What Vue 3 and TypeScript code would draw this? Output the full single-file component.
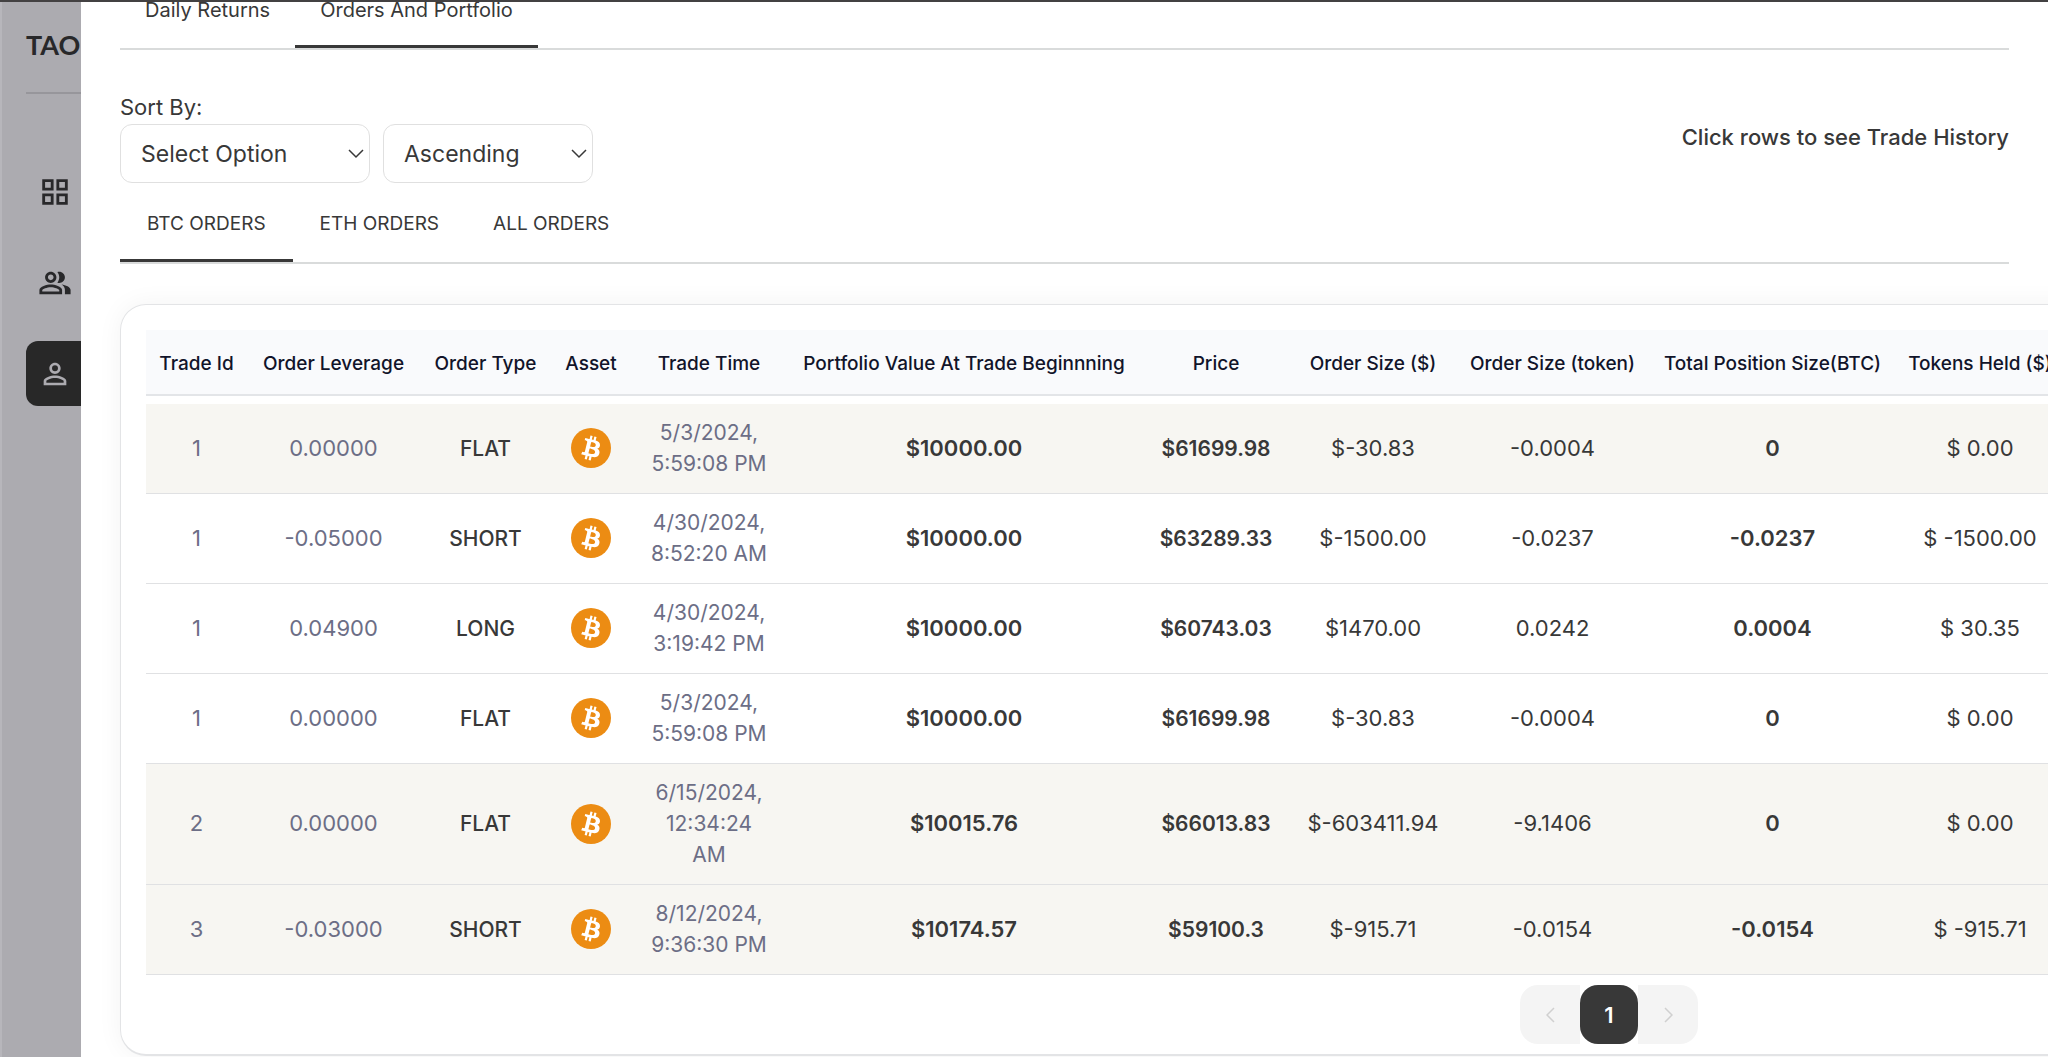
<script setup lang="ts">
import { ref } from 'vue'

interface Order {
  id: number
  leverage: string
  type: string
  time: string
  value: string
  price: string
  size: string
  tokens: string
  position: string
  held: string
  shaded: boolean
}

const pageTabs = ['Daily Returns', 'Orders And Portfolio']
const orderTabs = ['BTC ORDERS', 'ETH ORDERS', 'ALL ORDERS']
const activePage = ref('Orders And Portfolio')
const activeOrders = ref('BTC ORDERS')

const columns = [
  { label: 'Trade Id', width: 101 },
  { label: 'Order Leverage', width: 173 },
  { label: 'Order Type', width: 131 },
  { label: 'Asset', width: 80 },
  { label: 'Trade Time', width: 156 },
  { label: 'Portfolio Value At Trade Beginnning', width: 354 },
  { label: 'Price', width: 150 },
  { label: 'Order Size ($)', width: 164 },
  { label: 'Order Size (token)', width: 195 },
  { label: 'Total Position Size(BTC)', width: 245 },
  { label: 'Tokens Held ($)', width: 170 },
]

const orders: Order[] = [
  { id: 1, leverage: '0.00000', type: 'FLAT', time: '5/3/2024, 5:59:08 PM', value: '$10000.00', price: '$61699.98', size: '$-30.83', tokens: '-0.0004', position: '0', held: '$ 0.00', shaded: true },
  { id: 1, leverage: '-0.05000', type: 'SHORT', time: '4/30/2024, 8:52:20 AM', value: '$10000.00', price: '$63289.33', size: '$-1500.00', tokens: '-0.0237', position: '-0.0237', held: '$ -1500.00', shaded: false },
  { id: 1, leverage: '0.04900', type: 'LONG', time: '4/30/2024, 3:19:42 PM', value: '$10000.00', price: '$60743.03', size: '$1470.00', tokens: '0.0242', position: '0.0004', held: '$ 30.35', shaded: false },
  { id: 1, leverage: '0.00000', type: 'FLAT', time: '5/3/2024, 5:59:08 PM', value: '$10000.00', price: '$61699.98', size: '$-30.83', tokens: '-0.0004', position: '0', held: '$ 0.00', shaded: false },
  { id: 2, leverage: '0.00000', type: 'FLAT', time: '6/15/2024, 12:34:24 AM', value: '$10015.76', price: '$66013.83', size: '$-603411.94', tokens: '-9.1406', position: '0', held: '$ 0.00', shaded: true },
  { id: 3, leverage: '-0.03000', type: 'SHORT', time: '8/12/2024, 9:36:30 PM', value: '$10174.57', price: '$59100.3', size: '$-915.71', tokens: '-0.0154', position: '-0.0154', held: '$ -915.71', shaded: true },
]
</script>

<template>
  <div class="app">
    <aside class="sidebar">
      <div class="brand">TAO</div>
      <nav class="menu">
        <a href="#dashboard" class="menu-item" aria-label="Dashboard">
          <svg width="34" height="34" viewBox="0 0 24 24" fill="currentColor">
            <path d="M3 3v8h8V3H3zm6 6H5V5h4v4zm-6 4v8h8v-8H3zm6 6H5v-4h4v4zm4-16v8h8V3h-8zm6 6h-4V5h4v4zm-6 4v8h8v-8h-8zm6 6h-4v-4h4v4z" />
          </svg>
        </a>
        <a href="#miners" class="menu-item" aria-label="Miners">
          <svg width="34" height="34" viewBox="0 0 24 24" fill="currentColor">
            <path d="M16.67 13.13C18.04 14.06 19 15.32 19 17v3h4v-3c0-2.18-3.57-3.47-6.33-3.87zM15 12c2.21 0 4-1.79 4-4s-1.79-4-4-4c-.47 0-.91.1-1.33.24C14.5 5.27 15 6.58 15 8s-.5 2.73-1.33 3.76c.42.14.86.24 1.33.24zM9 12c2.21 0 4-1.79 4-4s-1.79-4-4-4-4 1.79-4 4 1.79 4 4 4zm0-6c1.1 0 2 .9 2 2s-.9 2-2 2-2-.9-2-2 .9-2 2-2zm0 7c-2.67 0-8 1.34-8 4v3h16v-3c0-2.66-5.33-4-8-4zm6 5H3v-.99C3.2 16.29 6.3 15 9 15s5.8 1.29 6 2v1z" />
          </svg>
        </a>
        <a href="#profile" class="menu-item active" aria-label="Profile">
          <svg width="34" height="34" viewBox="0 0 24 24" fill="currentColor">
            <path d="M12 5.9a2.1 2.1 0 1 1 0 4.2 2.1 2.1 0 0 1 0-4.2m0 9c2.97 0 6.1 1.46 6.1 2.1v1.1H5.9V17c0-.64 3.13-2.1 6.1-2.1M12 4C9.79 4 8 5.79 8 8s1.79 4 4 4 4-1.79 4-4-1.79-4-4-4zm0 9c-2.67 0-8 1.34-8 4v3h16v-3c0-2.66-5.33-4-8-4z" />
          </svg>
        </a>
      </nav>
    </aside>

    <main class="drawer">
      <div class="tabs" role="tablist">
        <button v-for="tab in pageTabs" :key="tab" type="button" role="tab" class="tab page-tab" :class="{ selected: tab === activePage }" :aria-selected="tab === activePage" @click="activePage = tab">{{ tab }}</button>
      </div>

      <div class="filters">
        <div>
          <label class="sort-label" for="sort-field">Sort By:</label>
          <div class="selects">
            <div class="select wide">
              <select id="sort-field"><option>Select Option</option></select>
              <svg class="stroked" width="16" height="10" viewBox="0 0 16 10"><path d="M1 1l7 7 7-7" /></svg>
            </div>
            <div class="select">
              <select aria-label="Sort direction"><option>Ascending</option><option>Descending</option></select>
              <svg class="stroked" width="16" height="10" viewBox="0 0 16 10"><path d="M1 1l7 7 7-7" /></svg>
            </div>
          </div>
        </div>
        <p class="hint">Click rows to see Trade History</p>
      </div>

      <div class="tabs" role="tablist">
        <button v-for="tab in orderTabs" :key="tab" type="button" role="tab" class="tab order-tab" :class="{ selected: tab === activeOrders }" :aria-selected="tab === activeOrders" @click="activeOrders = tab">{{ tab }}</button>
      </div>

      <section class="card">
        <table>
          <colgroup>
            <col v-for="c in columns" :key="c.label" :style="{ width: c.width + 'px' }" />
          </colgroup>
          <thead>
            <tr><th v-for="c in columns" :key="c.label" scope="col">{{ c.label }}</th></tr>
          </thead>
          <tbody>
            <tr v-for="(o, i) in orders" :key="i" :class="{ shaded: o.shaded }">
              <td class="muted">{{ o.id }}</td>
              <td class="muted">{{ o.leverage }}</td>
              <td class="type">{{ o.type }}</td>
              <td>
                <svg class="coin" width="40" height="40" viewBox="0 0 32 32" role="img" aria-label="Bitcoin">
                  <circle cx="16" cy="16" r="16" fill="#ec8c13" />
                  <path fill="#fff" d="M23.189 14.02c.314-2.096-1.283-3.223-3.465-3.975l.708-2.84-1.728-.43-.69 2.765c-.454-.114-.92-.22-1.385-.326l.695-2.783L15.596 6l-.708 2.839c-.376-.086-.746-.17-1.104-.26l.002-.009-2.384-.595-.46 1.846s1.283.294 1.256.312c.7.175.826.638.805 1.006l-.806 3.235c.048.012.11.03.18.057l-.183-.045-1.13 4.532c-.086.212-.303.531-.793.41.018.025-1.256-.313-1.256-.313l-.858 1.978 2.25.561c.418.105.828.215 1.231.318l-.715 2.872 1.727.43.708-2.84c.472.127.93.245 1.378.357l-.706 2.828 1.728.43.715-2.866c2.948.558 5.164.333 6.097-2.333.752-2.146-.037-3.385-1.588-4.192 1.13-.26 1.98-1.003 2.207-2.538zm-3.95 5.538c-.533 2.147-4.148.986-5.32.695l.95-3.805c1.172.293 4.929.872 4.37 3.11zm.535-5.569c-.487 1.953-3.495.96-4.47.717l.86-3.45c.975.243 4.118.696 3.61 2.733z" />
                </svg>
              </td>
              <td class="muted time">{{ o.time }}</td>
              <td class="strong">{{ o.value }}</td>
              <td class="strong price">{{ o.price }}</td>
              <td>{{ o.size }}</td>
              <td>{{ o.tokens }}</td>
              <td class="strong">{{ o.position }}</td>
              <td>{{ o.held }}</td>
            </tr>
          </tbody>
        </table>
        <nav class="pagination" aria-label="Pages">
          <button type="button" class="arrow prev" disabled aria-label="Previous page">
            <svg class="stroked" width="9" height="16" viewBox="0 0 9 16"><path d="M8 1L1 8l7 7" /></svg>
          </button>
          <button type="button" class="page" aria-current="page">1</button>
          <button type="button" class="arrow next" disabled aria-label="Next page">
            <svg class="stroked" width="9" height="16" viewBox="0 0 9 16"><path d="M1 1l7 7-7 7" /></svg>
          </button>
        </nav>
      </section>
    </main>
  </div>
</template>

<style>
body {
  margin: 0;
  overflow: hidden;
}
</style>

<style scoped>
* {
  box-sizing: border-box;
}
.app {
  display: flex;
  min-height: 100vh;
  overflow: hidden;
  border-top: 2px solid #434142;
  background: #fff;
  color: #383838;
  font-family: Inter, "Liberation Sans", sans-serif;
  font-size: 19px;
}
.sidebar {
  flex: 0 0 81px;
  padding-left: 24px;
  overflow: hidden;
  background: #acabb0;
  border-left: 2px solid #b7b6bb;
}
.brand {
  height: 92px;
  padding-top: 25px;
  border-bottom: 2px solid #97969b;
  color: #28282a;
  font-family: Lato, "Liberation Sans", sans-serif;
  font-size: 27px;
  font-weight: 700;
  line-height: 36px;
}
.menu {
  display: flex;
  flex-direction: column;
  gap: 26px;
  padding-top: 65px;
}
.menu-item {
  display: flex;
  align-items: center;
  width: 200px;
  height: 65px;
  padding-left: 12px;
  border-radius: 12px;
  color: #28282a;
}
.menu-item.active {
  background: #282828;
  color: #acabb0;
}
.drawer {
  flex: 1;
  min-width: 0;
  padding: 0 39px;
}
.tabs {
  display: flex;
  border-bottom: 2px solid #d9dbdb;
}
.tab {
  border: 0;
  border-bottom: 3px solid transparent;
  background: none;
  color: #383838;
  font: inherit;
  white-space: nowrap;
}
.tab.selected {
  border-bottom-color: #383838;
}
.page-tab {
  padding: 0 25px 26px;
  font-size: 20px;
  line-height: 17px;
}
.order-tab {
  padding: 27px 27px 21px;
  line-height: 28px;
}
.filters {
  display: flex;
  align-items: center;
  justify-content: space-between;
  padding-top: 41px;
}
.sort-label {
  display: block;
  font-size: 22px;
  line-height: 33px;
}
.selects {
  display: flex;
  gap: 13px;
}
.select {
  display: grid;
  align-items: center;
  width: 210px;
}
.select.wide {
  width: 250px;
}
.select select,
.select svg {
  grid-area: 1 / 1;
}
.select svg {
  justify-self: end;
  margin-right: 6px;
  pointer-events: none;
}
select {
  appearance: none;
  width: 100%;
  height: 59px;
  padding: 0 20px;
  border: 1px solid #e0e0e0;
  border-radius: 12px;
  background: #fff;
  color: #383838;
  font: inherit;
  font-size: 23px;
}
.stroked {
  fill: none;
  stroke: currentColor;
  stroke-width: 1.5;
}
.hint {
  margin: 0;
  font-size: 22px;
  font-weight: 500;
  line-height: 30px;
}
.card {
  width: 2978px;
  margin-top: 40px;
  padding: 25px 25px 10px;
  border: 1px solid #e3e4e6;
  border-bottom-width: 2px;
  border-radius: 26px;
  box-shadow: 0 0 26px rgba(0, 0, 0, 0.05);
}
table {
  width: 1919px;
  table-layout: fixed;
  border-spacing: 0;
  text-align: center;
}
th {
  height: 66px;
  padding: 2px 0 0;
  border-bottom: 2px solid #e3e5e8;
  background: #f9fafc;
  color: #11142a;
  font-size: 19px;
  font-weight: 500;
  white-space: nowrap;
}
tbody::before {
  content: "";
  display: table-row;
  height: 8px;
}
td {
  padding: 13px 13px 14px;
  border-bottom: 1px solid #e0e1e3;
  font-size: 22px;
  line-height: 31px;
}
.shaded td {
  background: #f7f6f2;
}
.muted {
  color: #6c6e86;
}
.time {
  padding-right: 18px;
  padding-left: 18px;
  font-size: 21px;
}
.type {
  font-size: 21px;
  font-weight: 500;
}
.strong {
  font-weight: 600;
}
.price {
  font-size: 21px;
}
.coin {
  display: block;
  margin: 0 auto;
}
.pagination {
  display: flex;
  justify-content: center;
  padding-top: 10px;
}
.pagination button {
  display: flex;
  align-items: center;
  justify-content: center;
  width: 60px;
  height: 59px;
  padding: 0;
  border: 0;
}
.arrow {
  background: #f4f4f4;
  color: #d0d0d0;
}
.prev {
  border-radius: 18px 0 0 18px;
}
.next {
  border-radius: 0 18px 18px 0;
}
.pagination .page {
  width: 58px;
  border-radius: 18px;
  background: #383838;
  color: #fff;
  font: 600 22px Inter, "Liberation Sans", sans-serif;
}
</style>
